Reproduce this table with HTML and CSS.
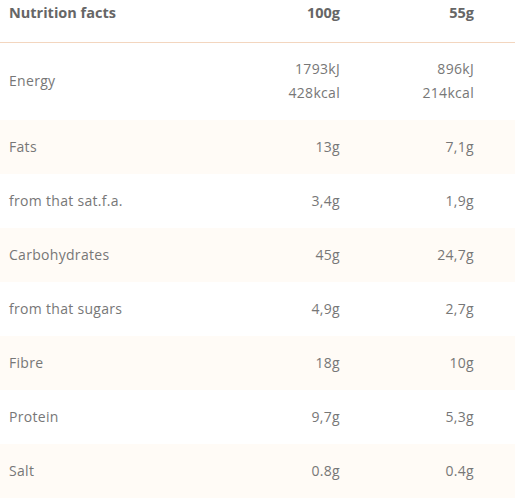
FILE: index.html
```html
<!DOCTYPE html>
<html>
<head>
<meta charset="utf-8">
<link rel="stylesheet" href="styles.css">
</head>
<body>
<div class="facts">
  <div class="row head">
    <div class="label">Nutrition facts</div>
    <div class="val">100g</div>
    <div class="val">55g</div>
  </div>
  <div class="row energy">
    <div class="label">Energy</div>
    <div class="val">1793kJ<br>428kcal</div>
    <div class="val">896kJ<br>214kcal</div>
  </div>
  <div class="row alt"><div class="label">Fats</div><div class="val">13g</div><div class="val">7,1g</div></div>
  <div class="row"><div class="label">from that sat.f.a.</div><div class="val">3,4g</div><div class="val">1,9g</div></div>
  <div class="row alt"><div class="label">Carbohydrates</div><div class="val">45g</div><div class="val">24,7g</div></div>
  <div class="row"><div class="label">from that sugars</div><div class="val">4,9g</div><div class="val">2,7g</div></div>
  <div class="row alt"><div class="label">Fibre</div><div class="val">18g</div><div class="val">10g</div></div>
  <div class="row"><div class="label">Protein</div><div class="val">9,7g</div><div class="val">5,3g</div></div>
  <div class="row alt"><div class="label">Salt</div><div class="val">0.8g</div><div class="val">0.4g</div></div>
</div>
</body>
</html>
```
FILE: styles.css
```css
html, body {
  margin: 0;
  padding: 0;
  background: #fff;
}
.facts {
  font-family: "Open Sans", sans-serif;
  font-size: 14px;
  letter-spacing: 0.3px;
  color: #777;
}
.row {
  display: grid;
  grid-template-columns: 1fr 120px 134px;
  align-items: center;
  padding: 0 41px 2px 9px;
  box-sizing: border-box;
  height: 54px;
}
.val {
  text-align: right;
}
.head {
  align-items: start;
  padding-top: 3px;
  border-bottom: 1px solid #f3d6bf;
  height: 43px;
  font-weight: 700;
  font-size: 14.5px;
  letter-spacing: 0;
  color: #666;
  line-height: 20px;
}
.energy {
  height: 77px;
  line-height: 24px;
}
.alt {
  background: #fffbf6;
}
```
